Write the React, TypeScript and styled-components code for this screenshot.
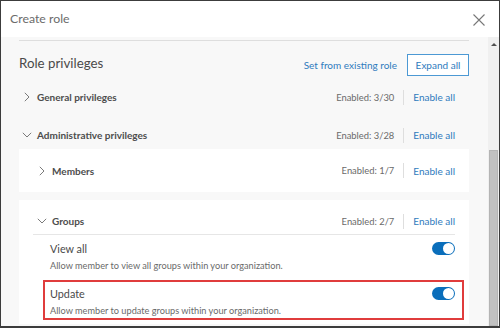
import React from "react";
import styled, { createGlobalStyle } from "styled-components";

const Global = createGlobalStyle`
  html, body { margin: 0; padding: 0; background: #ffffff; }
  body { font-family: "Lato", "Liberation Sans", sans-serif; }
  * { box-sizing: border-box; }
`;

const Frame = styled.div`
  width: 500px;
  height: 328px;
  border: 1px solid #3c3c3c;
  border-bottom-width: 2px;
  display: flex;
  flex-direction: column;
  overflow: hidden;
  background: #fff;
`;

const Header = styled.div`
  height: 36px;
  flex: none;
  display: flex;
  align-items: center;
  justify-content: space-between;
  padding: 0 14px 0 9px;
  background: #fff;
`;

const Title = styled.div`
  font-size: 12.3px;
  color: #6b6b6b;
  margin-top: -1px;
`;

const CloseBtn = styled.button`
  width: 12px;
  height: 12px;
  padding: 0;
  border: none;
  background: none;
  display: flex;
  margin-top: 1px;
`;

const Body = styled.div`
  flex: 1;
  min-height: 0;
  display: flex;
`;

const Content = styled.div`
  flex: 1;
  background: #f8f8f8;
  padding: 3px 19px 0 18px;
  overflow: hidden;
`;

const Inner = styled.div`
  border-top: 1px solid #dedede;
`;

const Scrollbar = styled.div`
  width: 11px;
  flex: none;
  background: #f0f0f0;
  display: flex;
  flex-direction: column;
  align-items: center;
  padding-top: 6px;
`;

const ScrollArrow = styled.div`
  width: 0;
  height: 0;
  border-left: 3px solid transparent;
  border-right: 3px solid transparent;
  border-bottom: 3px solid #505050;
`;

const Thumb = styled.div`
  margin-top: 104px;
  width: 9px;
  flex: 1;
  background: #c1c1c1;
  border: 1px solid #b4b4b4;
`;

const TopRow = styled.div`
  margin-top: 13px;
  height: 22px;
  display: flex;
  align-items: center;
  justify-content: space-between;
`;

const SectionTitle = styled.div`
  font-size: 13.3px;
  color: #4a4a4a;
  margin-top: -5px;
`;

const TopActions = styled.div`
  display: flex;
  align-items: center;
  gap: 10px;
`;

const Link = styled.span`
  font-size: 10px;
  color: #2f7bbd;
`;

const OutlineButton = styled.button`
  height: 22px;
  width: 62px;
  padding: 0;
  border: 1px solid #4c99d4;
  background: #fff;
  color: #2f7bbd;
  font-family: inherit;
  font-size: 10px;
`;

const Row = styled.div<{ $top?: number }>`
  height: 28px;
  display: flex;
  align-items: center;
  padding: 0 14px 0 2px;
  margin-top: ${(p) => p.$top ?? 0}px;
`;

const ChevronBox = styled.span`
  width: 12px;
  height: 12px;
  display: flex;
  align-items: center;
  justify-content: center;
  margin-right: 4px;
`;

const RowTitle = styled.span`
  flex: 1;
  font-size: 10px;
  font-weight: 700;
  color: #4d4d4d;
`;

const Count = styled.span`
  font-size: 9.4px;
  color: #6a6a6a;
`;

const Divider = styled.span`
  width: 1px;
  height: 15px;
  background: #dedede;
  margin: 0 9px 0 9px;
`;

const Card = styled.div<{ $top?: number }>`
  background: #fff;
  margin-top: ${(p) => p.$top ?? 0}px;
`;

const CardHead = styled.div<{ $h: number; $padTop?: number; $line?: boolean }>`
  margin: 0 14px;
  height: ${(p) => p.$h}px;
  display: flex;
  align-items: center;
  padding: ${(p) => p.$padTop ?? 0}px 0 0 3px;
  border-bottom: ${(p) => (p.$line ? "1px solid #e6e6e6" : "none")};
`;

const ItemList = styled.div`
  display: flex;
  flex-direction: column;
  gap: 5px;
  padding: 0 5px 4px 24px;
`;

const Item = styled.div<{ $marked?: boolean }>`
  height: 40px;
  border: 2px solid ${(p) => (p.$marked ? "#e03c3c" : "transparent")};
  padding: 4px 7px 0 5px;
  display: grid;
  grid-template-columns: 1fr auto;
  grid-template-rows: 15px 14px;
  row-gap: 2px;
  align-items: center;
`;

const ItemTitle = styled.span`
  font-size: 10.8px;
  color: #4a4a4a;
`;

const ItemDesc = styled.span`
  grid-column: 1 / span 2;
  font-size: 9.2px;
  color: #6a6a6a;
`;

const Toggle = styled.span<{ $on: boolean }>`
  width: 23px;
  height: 13px;
  border-radius: 7px;
  background: ${(p) => (p.$on ? "#0a6ebb" : "#bbb")};
  display: flex;
  align-items: center;
  justify-content: ${(p) => (p.$on ? "flex-end" : "flex-start")};
  padding: 0 1px;
`;

const Knob = styled.span`
  width: 11px;
  height: 11px;
  border-radius: 50%;
  background: #fff;
`;

const ChevronRight = () => (
  <svg width="6" height="10" viewBox="0 0 6 10">
    <path d="M0.8 0.8 L5 5 L0.8 9.2" fill="none" stroke="#7a7a7a" strokeWidth="1" />
  </svg>
);

const ChevronDown = () => (
  <svg width="10" height="6" viewBox="0 0 10 6">
    <path d="M0.8 0.8 L5 5 L9.2 0.8" fill="none" stroke="#7a7a7a" strokeWidth="1" />
  </svg>
);

const Counter = ({ text }: { text: string }) => (
  <>
    <Count>{text}</Count>
    <Divider />
    <Link>Enable all</Link>
  </>
);

const Privilege = ({ title, desc, marked }: { title: string; desc: string; marked?: boolean }) => (
  <Item $marked={marked}>
    <ItemTitle>{title}</ItemTitle>
    <Toggle $on>
      <Knob />
    </Toggle>
    <ItemDesc>{desc}</ItemDesc>
  </Item>
);

export default function App() {
  return (
    <>
      <Global />
      <Frame>
        <Header>
          <Title>Create role</Title>
          <CloseBtn aria-label="Close">
            <svg width="12" height="12" viewBox="0 0 12 12">
              <path d="M0.5 0.5 L11.5 11.5 M11.5 0.5 L0.5 11.5" stroke="#777" strokeWidth="1.1" />
            </svg>
          </CloseBtn>
        </Header>
        <Body>
          <Content>
            <Inner>
              <TopRow>
                <SectionTitle>Role privileges</SectionTitle>
                <TopActions>
                  <Link>Set from existing role</Link>
                  <OutlineButton>Expand all</OutlineButton>
                </TopActions>
              </TopRow>
              <Row $top={7}>
                <ChevronBox>
                  <ChevronRight />
                </ChevronBox>
                <RowTitle>General privileges</RowTitle>
                <Counter text="Enabled: 3/30" />
              </Row>
              <Row $top={10}>
                <ChevronBox>
                  <ChevronDown />
                </ChevronBox>
                <RowTitle>Administrative privileges</RowTitle>
                <Counter text="Enabled: 3/28" />
              </Row>
              <Card>
                <CardHead $h={43}>
                  <ChevronBox>
                    <ChevronRight />
                  </ChevronBox>
                  <RowTitle>Members</RowTitle>
                  <Counter text="Enabled: 1/7" />
                </CardHead>
              </Card>
              <Card $top={8}>
                <CardHead $h={35} $padTop={8} $line>
                  <ChevronBox>
                    <ChevronDown />
                  </ChevronBox>
                  <RowTitle>Groups</RowTitle>
                  <Counter text="Enabled: 2/7" />
                </CardHead>
                <ItemList>
                  <Privilege
                    title="View all"
                    desc="Allow member to view all groups within your organization."
                  />
                  <Privilege
                    title="Update"
                    desc="Allow member to update groups within your organization."
                    marked
                  />
                </ItemList>
              </Card>
            </Inner>
          </Content>
          <Scrollbar>
            <ScrollArrow />
            <Thumb />
          </Scrollbar>
        </Body>
      </Frame>
    </>
  );
}
